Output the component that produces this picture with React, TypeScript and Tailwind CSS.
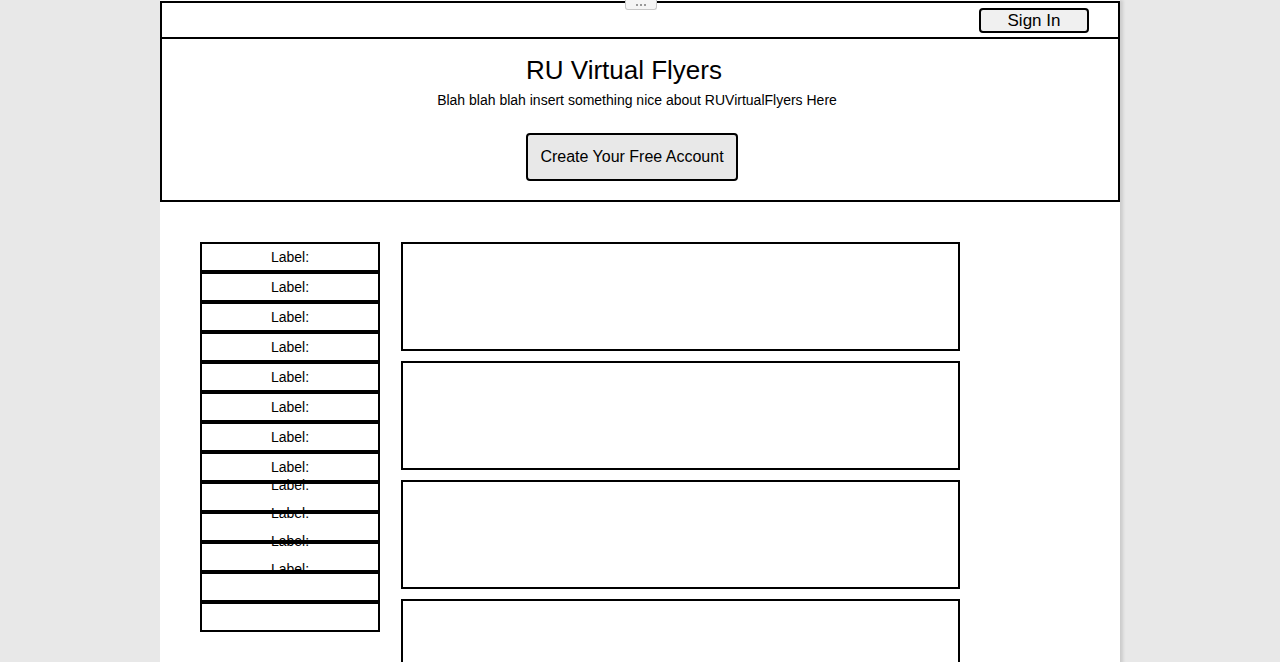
const items = Array.from({ length: 13 }, (_, i) => i);
const stackedLabels = [235, 263, 291, 319];

export default function App() {
  return (
    <div className="min-h-[662px] bg-[#e8e8e8] font-['Liberation_Sans',Arial,sans-serif] text-black">
      <div className="relative mx-auto min-h-[662px] w-[960px] bg-white shadow-[3px_0_3px_rgba(0,0,0,0.12)]">
        <div className="absolute left-[465px] top-0 flex h-[10px] w-[32px] items-center justify-center gap-[2px] rounded-b-[3px] border border-t-0 border-[#c8c8c8] bg-[#f5f5f5]">
          <span className="h-[2px] w-[2px] bg-[#999]" />
          <span className="h-[2px] w-[2px] bg-[#999]" />
          <span className="h-[2px] w-[2px] bg-[#999]" />
        </div>

        <div className="pt-px">
          <div className="flex h-[38px] items-start justify-end border-2 border-black pr-[29px] pt-[5px]">
            <button className="h-[25px] w-[110px] rounded-[4px] border-2 border-black bg-[#f0f0f0] text-[17px] leading-none">
              Sign In
            </button>
          </div>
          <div className="flex h-[163px] flex-col items-center border-2 border-t-0 border-black pt-[16px]">
            <h1 className="pr-[32px] text-[26px] leading-[30px]">RU Virtual Flyers</h1>
            <p className="mt-[6px] pr-[6px] text-[14px] leading-[18px]">
              Blah blah blah insert something nice about RUVirtualFlyers Here
            </p>
            <button className="mt-[24px] mr-[16px] h-[48px] w-[212px] rounded-[4px] border-2 border-black bg-[#e8e8e8] text-[16px]">
              Create Your Free Account
            </button>
          </div>
        </div>

        <div className="flex gap-[21px] pl-[40px] pt-[40px]">
          <div className="relative w-[180px]">
            {items.map((i) => (
              <div
                key={i}
                className="flex h-[30px] items-center justify-center border-2 border-black pt-px text-[14px]"
              >
                {i < 8 ? "Label:" : ""}
              </div>
            ))}
            {stackedLabels.map((top) => (
              <span
                key={top}
                className="absolute left-0 w-full text-center text-[14px] leading-[16px]"
                style={{ top }}
              >
                Label:
              </span>
            ))}
          </div>
          <div className="flex w-[559px] flex-col gap-[10px]">
            {[0, 1, 2, 3].map((i) => (
              <div key={i} className="h-[109px] border-2 border-black" />
            ))}
          </div>
        </div>
      </div>
    </div>
  );
}
